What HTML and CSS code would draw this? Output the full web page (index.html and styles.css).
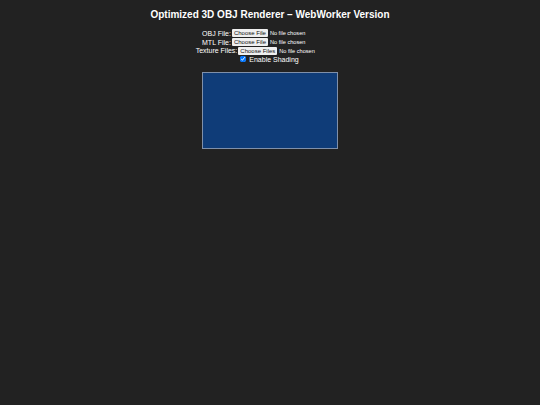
FILE: index.html
```html
<!DOCTYPE html>
<html>

<head>
    <title>OBJ Renderer</title>
    <meta charset="utf-8">
    <link rel="stylesheet" href="styles.css">
</head>

<body>
    <h1>Optimized 3D OBJ Renderer – WebWorker Version</h1>

    <section class="controls">
        <div class="row">
            <label for="objFile">OBJ File:</label>
            <input type="file" id="objFile" accept=".obj">
        </div>
        <div class="row">
            <label for="mtlFile">MTL File:</label>
            <input type="file" id="mtlFile" accept=".mtl">
        </div>
        <div class="row">
            <label for="texFiles">Texture Files:</label>
            <input type="file" id="texFiles" multiple>
        </div>
        <div class="row">
            <input type="checkbox" id="shading" checked>
            <label for="shading">Enable Shading</label>
        </div>
    </section>

    <canvas id="view" width="134" height="75"></canvas>
</body>

</html>
```

FILE: styles.css
```css
body {
    background-color: #222222;
    color: #ffffff;
    font-family: "Liberation Sans", Arial, sans-serif;
    font-size: 7px;
    margin: 0;
    text-align: center;
}

h1 {
    font-size: 10px;
    margin: 9px 0 9px 0;
}

.controls {
    display: flex;
    flex-direction: column;
    align-items: center;
}

.row {
    display: flex;
    align-items: center;
    height: 8.7px;
}

.row label {
    margin-right: 1px;
}

input[type="file"] {
    font-size: 5.6px;
    font-family: "Liberation Sans", Arial, sans-serif;
    color: #ffffff;
}

input[type="file"]::file-selector-button {
    font-size: 6px;
    font-family: "Liberation Sans", Arial, sans-serif;
    color: #111111;
    background-color: #efefef;
    border: none;
    border-radius: 1px;
    padding: 0 2px;
    height: 8px;
    margin-right: 2px;
}

input[type="checkbox"] {
    width: 6px;
    height: 6px;
    margin: 0 3px 0 0;
}

#view {
    display: block;
    margin: 8px auto 0 auto;
    background-color: #0f3c78;
    border: 1px solid #7f90aa;
}
```
